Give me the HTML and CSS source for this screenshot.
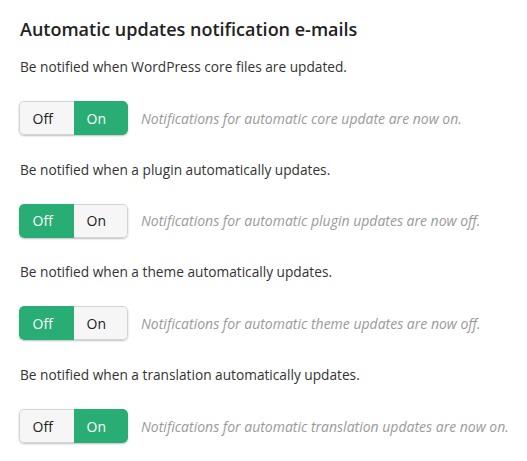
FILE: index.html
```html
<!DOCTYPE html>
<html>
<head>
<meta charset="utf-8">
<link rel="stylesheet" href="styles.css">
</head>
<body>
<div class="panel">
  <h2 class="title">Automatic updates notification e-mails</h2>
  <div class="setting">
    <p class="label">Be notified when WordPress core files are updated.</p>
    <div class="row">
      <div class="toggle"><span class="seg">Off</span><span class="seg active">On</span></div>
      <span class="hint">Notifications for automatic core update are now on.</span>
    </div>
  </div>
  <div class="setting">
    <p class="label">Be notified when a plugin automatically updates.</p>
    <div class="row">
      <div class="toggle"><span class="seg active">Off</span><span class="seg">On</span></div>
      <span class="hint">Notifications for automatic plugin updates are now off.</span>
    </div>
  </div>
  <div class="setting">
    <p class="label">Be notified when a theme automatically updates.</p>
    <div class="row">
      <div class="toggle"><span class="seg active">Off</span><span class="seg">On</span></div>
      <span class="hint">Notifications for automatic theme updates are now off.</span>
    </div>
  </div>
  <div class="setting">
    <p class="label">Be notified when a translation automatically updates.</p>
    <div class="row">
      <div class="toggle"><span class="seg">Off</span><span class="seg active">On</span></div>
      <span class="hint">Notifications for automatic translation updates are now on.</span>
    </div>
  </div>
</div>
</body>
</html>
```

FILE: styles.css
```css
html, body {
  margin: 0;
  padding: 0;
  background: #ffffff;
}
.panel {
  padding: 17px 0 0 19px;
  font-family: "Open Sans", "Liberation Sans", sans-serif;
  color: #2b2b2b;
}
.title {
  margin: 0 0 16px 1px;
  font-size: 18px;
  font-weight: 600;
  line-height: 24px;
  color: #222;
}
.setting {
  display: flex;
  flex-direction: column;
  gap: 24px;
  margin-bottom: 24.7px;
}
.label {
  margin: 0 0 0 1px;
  font-size: 13.7px;
  line-height: 20px;
  color: #333;
}
.row {
  display: flex;
  align-items: center;
  gap: 13px;
}
.toggle {
  flex: none;
  display: flex;
  width: 109px;
  height: 34px;
  border-radius: 5px;
  overflow: hidden;
  box-shadow: 0 1px 2px rgba(0,0,0,0.25);
}
.seg {
  flex: 1;
  display: flex;
  align-items: center;
  justify-content: center;
  padding-right: 8px;
  font-size: 14px;
  color: #222;
  background: #f6f6f6;
  border: 1px solid #d4d4d4;
}
.seg:first-child {
  border-right: none;
  border-radius: 5px 0 0 5px;
}
.seg:last-child {
  border-left: none;
  border-radius: 0 5px 5px 0;
}
.seg.active {
  background: #28ad74;
  border-color: #28ad74;
  color: #fff;
}
.hint {
  white-space: nowrap;
  font-size: 14px;
  font-style: italic;
  color: #9a9a9a;
}
```
